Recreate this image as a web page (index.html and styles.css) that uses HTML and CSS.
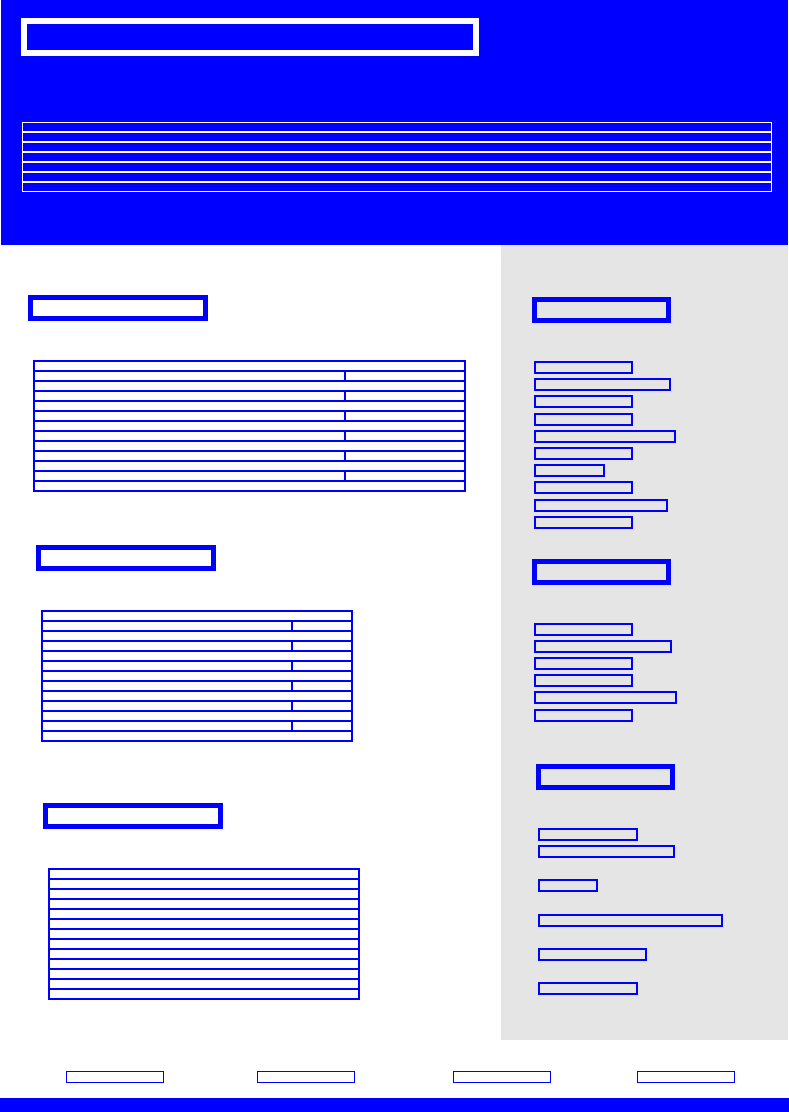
FILE: index.html
```html
<!DOCTYPE html>
<html lang="en">
<head>
    <meta charset="UTF-8">
    <meta name="viewport" content="width=device-width, initial-scale=1.0">
    <title>Wireframe</title>
    <link rel="stylesheet" href="styles.css">
</head>
<body>
    <div class="page">
        <header class="top">
            <div class="logo"></div>
            <ul class="menu">
                <li></li><li></li><li></li><li></li><li></li><li></li><li></li>
            </ul>
        </header>

        <main class="main">
            <div class="content">
                <section class="sec sec-1">
                    <div class="sec-title"></div>
                    <div class="grid grid-wide">
                        <div class="row"></div>
                        <div class="row"><span class="cell"></span></div>
                        <div class="row"></div>
                        <div class="row"><span class="cell"></span></div>
                        <div class="row"></div>
                        <div class="row"><span class="cell"></span></div>
                        <div class="row"></div>
                        <div class="row"><span class="cell"></span></div>
                        <div class="row"></div>
                        <div class="row"><span class="cell"></span></div>
                        <div class="row"></div>
                        <div class="row"><span class="cell"></span></div>
                        <div class="row"></div>
                    </div>
                </section>

                <section class="sec sec-2">
                    <div class="sec-title"></div>
                    <div class="grid grid-narrow">
                        <div class="row"></div>
                        <div class="row"><span class="cell"></span></div>
                        <div class="row"></div>
                        <div class="row"><span class="cell"></span></div>
                        <div class="row"></div>
                        <div class="row"><span class="cell"></span></div>
                        <div class="row"></div>
                        <div class="row"><span class="cell"></span></div>
                        <div class="row"></div>
                        <div class="row"><span class="cell"></span></div>
                        <div class="row"></div>
                        <div class="row"><span class="cell"></span></div>
                        <div class="row"></div>
                    </div>
                </section>

                <section class="sec sec-3">
                    <div class="sec-title"></div>
                    <div class="grid grid-plain">
                        <div class="row"></div><div class="row"></div><div class="row"></div>
                        <div class="row"></div><div class="row"></div><div class="row"></div>
                        <div class="row"></div><div class="row"></div><div class="row"></div>
                        <div class="row"></div><div class="row"></div><div class="row"></div>
                        <div class="row"></div>
                    </div>
                </section>
            </div>

            <aside class="side">
                <div class="side-title"></div>
                <ul class="links links-1">
                    <li class="w99"></li>
                    <li class="w137"></li>
                    <li class="w99"></li>
                    <li class="w99"></li>
                    <li class="w142"></li>
                    <li class="w99"></li>
                    <li class="w71"></li>
                    <li class="w99"></li>
                    <li class="w134"></li>
                    <li class="w99"></li>
                </ul>

                <div class="side-title side-title-2"></div>
                <ul class="links links-2">
                    <li class="w99"></li>
                    <li class="w138"></li>
                    <li class="w99"></li>
                    <li class="w99"></li>
                    <li class="w143"></li>
                    <li class="w99"></li>
                </ul>

                <div class="side-title side-title-3"></div>
                <div class="notes">
                    <p><span class="w100"></span><span class="w137"></span></p>
                    <p><span class="w60"></span></p>
                    <p><span class="w185"></span></p>
                    <p><span class="w109"></span></p>
                    <p><span class="w100"></span></p>
                </div>
            </aside>
        </main>
    </div>

    <footer class="foot">
        <nav class="foot-links">
            <a href="#"></a>
            <a href="#"></a>
            <a href="#"></a>
            <a href="#"></a>
        </nav>
        <div class="foot-bar"></div>
    </footer>
</body>
</html>
```

FILE: styles.css
```css
* {
    box-sizing: border-box;
}
body {
    margin: 0;
    font-family: "Liberation Sans", Arial, sans-serif;
    background-color: #fff;
}
.page {
    margin: 0 1px;
}

/* header */
.top {
    background-color: #00f;
    height: 245px;
    padding: 18px 0 0 20px;
}
.logo {
    width: 458px;
    height: 38px;
    border: 6px solid #fff;
}
.menu {
    list-style: none;
    margin: 66px 0 0 1px;
    padding: 0;
    width: 750px;
}
.menu li {
    height: 10px;
    border: 1px solid #fff;
}

/* main area */
.main {
    display: flex;
    height: 795px;
}
.content {
    width: 500px;
    padding-top: 50px;
}
.sec-title {
    width: 180px;
    height: 26px;
    border: 5px solid #00f;
    margin-bottom: 39px;
}
.sec-1 { padding-left: 27px; }
.sec-2 { padding-left: 35px; margin-top: 53px; }
.sec-3 { padding-left: 42px; margin-top: 61px; }

.grid {
    margin-left: 5px;
    border-top: 2px solid #00f;
}
.grid-wide { width: 433px; }
.grid-narrow, .grid-plain { width: 312px; }
.row {
    height: 10px;
    border: 2px solid #00f;
    border-top: 0;
}
.cell {
    display: block;
    height: 100%;
    border-right: 2px solid #00f;
}
.grid-wide .cell { width: 311px; }
.grid-narrow .cell { width: 250px; }

/* sidebar */
.side {
    flex: 1;
    background-color: #e5e5e5;
    padding: 52px 0 0 31px;
}
.side-title {
    width: 139px;
    height: 26px;
    border: 5px solid #00f;
    margin-bottom: 38px;
}
.side-title-2 { margin-top: 30px; }
.side-title-3 { margin-top: 42px; margin-left: 4px; }

.links {
    list-style: none;
    margin: 0 0 0 2px;
    padding: 0;
    display: flex;
    flex-direction: column;
    align-items: flex-start;
    gap: 4.2px;
}
.links li, .notes span {
    display: block;
    height: 13px;
    border: 2px solid #00f;
}
.links-2 { margin-left: 1.5px; }

.notes {
    margin-left: 6px;
}
.notes p {
    margin: 0 0 21.4px;
    display: flex;
    flex-direction: column;
    align-items: flex-start;
    gap: 4.2px;
}

.w60 { width: 60px; }
.w71 { width: 71px; }
.w99 { width: 99px; }
.w100 { width: 100px; }
.w109 { width: 109px; }
.w134 { width: 134px; }
.w137 { width: 137px; }
.w138 { width: 138px; }
.w142 { width: 142px; }
.w143 { width: 143px; }
.w185 { width: 185px; }

/* footer */
.foot-links {
    display: flex;
    padding: 31px 0 0 66px;
    height: 58px;
}
.foot-links a {
    display: block;
    width: 98px;
    height: 12px;
    border: 1px solid #00f;
}
.foot-links a:nth-child(2) { margin-left: 93px; }
.foot-links a:nth-child(3) { margin-left: 98px; }
.foot-links a:nth-child(4) { margin-left: 86px; }
.foot-bar {
    height: 14px;
    background-color: #00f;
}
```
